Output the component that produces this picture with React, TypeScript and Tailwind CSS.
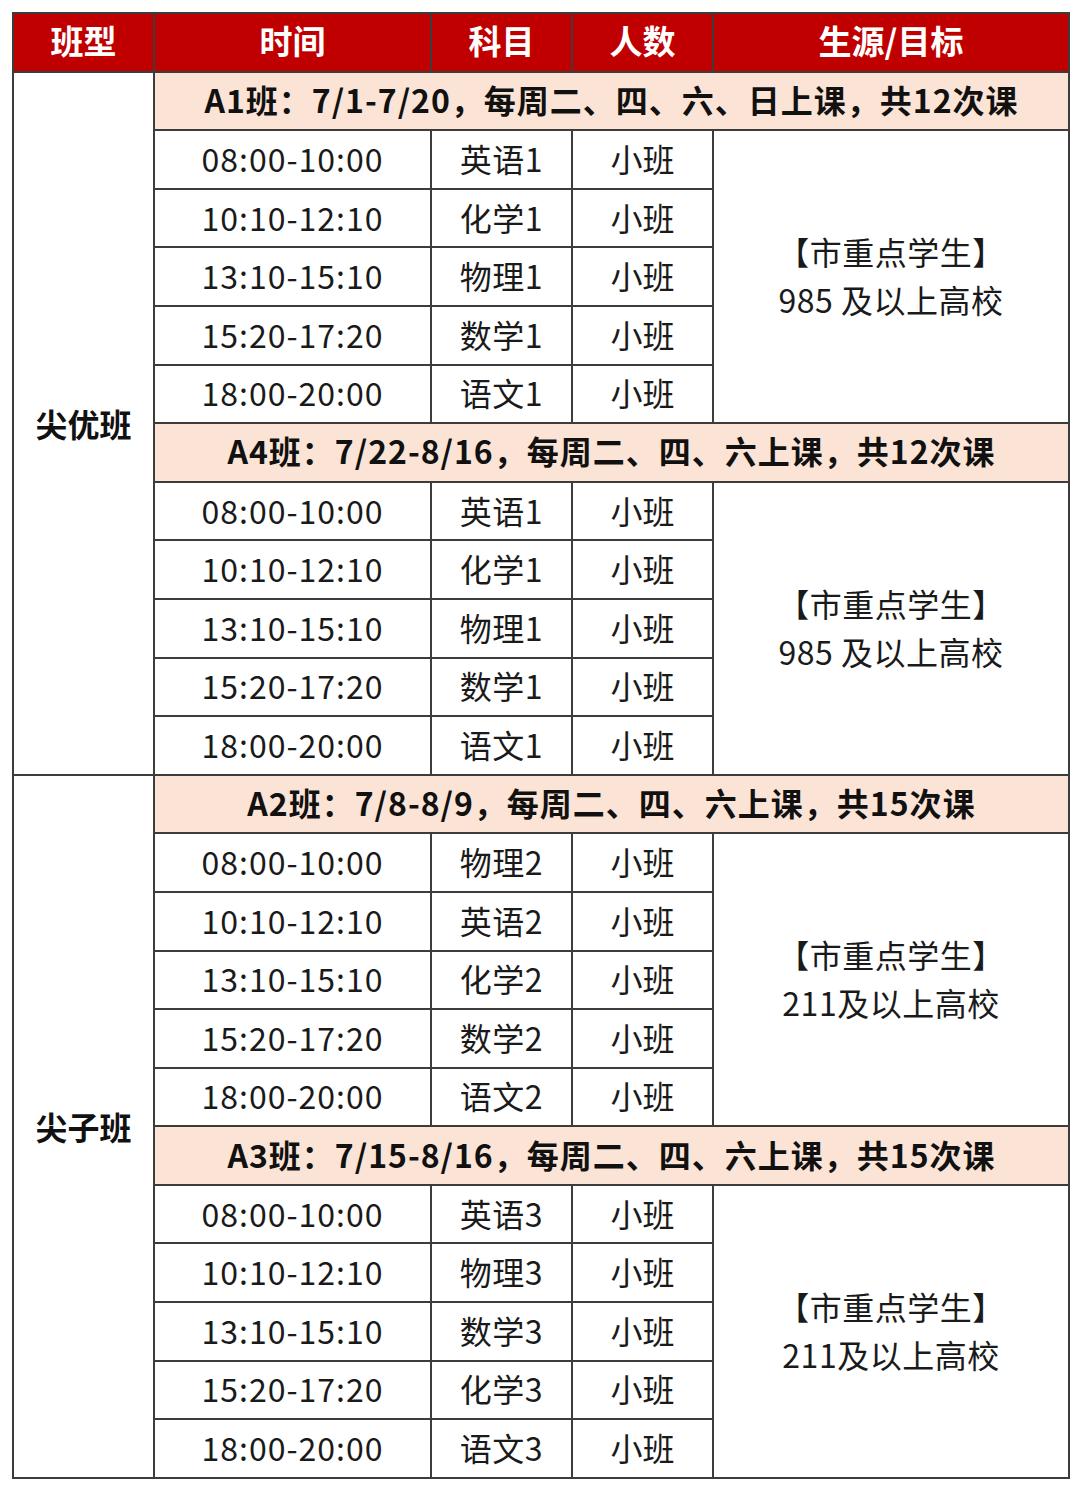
import React from "react";

type Block = {
  band: string;
  rows: [string, string][];
  target: [string, string];
};

const groups: { name: string; blocks: Block[] }[] = [
  {
    name: "尖优班",
    blocks: [
      {
        band: "A1班：7/1-7/20，每周二、四、六、日上课，共12次课",
        rows: [
          ["08:00-10:00", "英语1"],
          ["10:10-12:10", "化学1"],
          ["13:10-15:10", "物理1"],
          ["15:20-17:20", "数学1"],
          ["18:00-20:00", "语文1"],
        ],
        target: ["【市重点学生】", "985 及以上高校"],
      },
      {
        band: "A4班：7/22-8/16，每周二、四、六上课，共12次课",
        rows: [
          ["08:00-10:00", "英语1"],
          ["10:10-12:10", "化学1"],
          ["13:10-15:10", "物理1"],
          ["15:20-17:20", "数学1"],
          ["18:00-20:00", "语文1"],
        ],
        target: ["【市重点学生】", "985 及以上高校"],
      },
    ],
  },
  {
    name: "尖子班",
    blocks: [
      {
        band: "A2班：7/8-8/9，每周二、四、六上课，共15次课",
        rows: [
          ["08:00-10:00", "物理2"],
          ["10:10-12:10", "英语2"],
          ["13:10-15:10", "化学2"],
          ["15:20-17:20", "数学2"],
          ["18:00-20:00", "语文2"],
        ],
        target: ["【市重点学生】", "211及以上高校"],
      },
      {
        band: "A3班：7/15-8/16，每周二、四、六上课，共15次课",
        rows: [
          ["08:00-10:00", "英语3"],
          ["10:10-12:10", "物理3"],
          ["13:10-15:10", "数学3"],
          ["15:20-17:20", "化学3"],
          ["18:00-20:00", "语文3"],
        ],
        target: ["【市重点学生】", "211及以上高校"],
      },
    ],
  },
];

const cell = "border-2 border-[#3c3c3c] text-center align-middle p-0";

export default function App() {
  return (
    <div
      className="w-[1080px] h-[1490px] bg-white pt-[12px] pl-[12px]"
      style={{ fontFamily: '"Microsoft YaHei", "Noto Sans CJK SC", "Noto Sans", sans-serif' }}
    >
      <table className="border-collapse w-[1056px] table-fixed text-[#1a1a1a]">
        <colgroup>
          <col className="w-[141px]" />
          <col className="w-[277px]" />
          <col className="w-[141px]" />
          <col className="w-[141px]" />
          <col className="w-[356px]" />
        </colgroup>
        <thead>
          <tr className="h-[58.6px] bg-[#c00000] text-white text-[33px] font-bold">
            <th className={cell + " pb-[3px]"}>班型</th>
            <th className={cell + " pb-[3px]"}>时间</th>
            <th className={cell + " pb-[3px]"}>科目</th>
            <th className={cell + " pb-[3px]"}>人数</th>
            <th className={cell + " pb-[3px]"}>生源/目标</th>
          </tr>
        </thead>
        <tbody>
          {groups.map((g) =>
            g.blocks.map((b, bi) => (
              <React.Fragment key={g.name + bi}>
                <tr className="h-[58.6px]">
                  {bi === 0 && (
                    <td
                      rowSpan={12}
                      className={cell + " bg-white text-[32px] font-bold text-[#111]"}
                    >
                      {g.name}
                    </td>
                  )}
                  <td
                    colSpan={4}
                    className={cell + " bg-[#fbe4d5] text-[32px] font-bold text-[#111] tracking-[1px] pb-[4px]"}
                  >
                    {b.band}
                  </td>
                </tr>
                {b.rows.map((r, ri) => (
                  <tr key={ri} className="h-[58.6px] text-[32px]">
                    <td className={cell + " tracking-[1px] pb-[3px]"}>{r[0]}</td>
                    <td className={cell + " tracking-[0.5px] pb-[3px]"}>{r[1]}</td>
                    <td className={cell + " pb-[3px]"}>小班</td>
                    {ri === 0 && (
                      <td rowSpan={5} className={cell + " leading-[48px] tracking-[0.5px] pb-[3px]"}>
                        <div>{b.target[0]}</div>
                        <div>{b.target[1]}</div>
                      </td>
                    )}
                  </tr>
                ))}
              </React.Fragment>
            ))
          )}
        </tbody>
      </table>
    </div>
  );
}
